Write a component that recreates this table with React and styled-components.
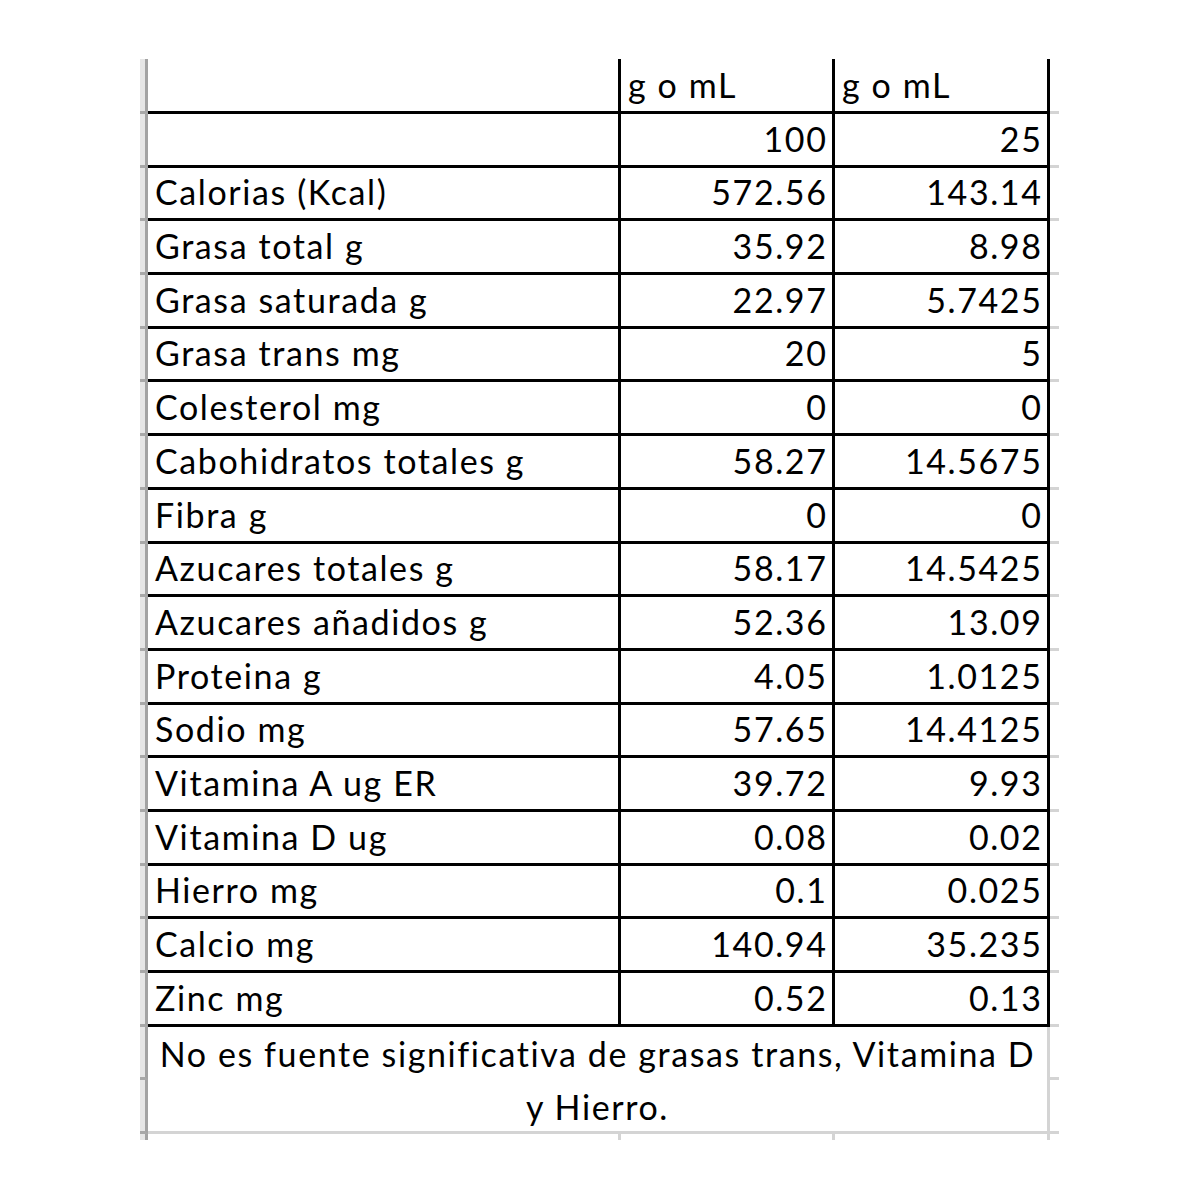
import React from "react";
import styled, { createGlobalStyle } from "styled-components";

const GlobalStyle = createGlobalStyle`
  * { box-sizing: border-box; }
  body {
    margin: 0;
    background: #fff;
    font-family: Lato, "Open Sans", sans-serif;
    color: #000;
  }
`;

const BLACK = "#000";
const GRID = "#d4d4d4";

const Sheet = styled.div`
  padding: 59px 0 0 140px;
  display: flex;
  flex-direction: column;
`;

const Row = styled.div`
  display: flex;
  height: ${(p) => p.h}px;
`;

const Gutter = styled.div`
  width: 8px;
  flex: none;
  background: #e6e6e6;
  border-right: 3px solid #a3a3a3;
  border-bottom: ${(p) => (p.tick ? "3px solid #a8a8a8" : "none")};
  height: 100%;
`;

const GutterStack = styled.div`
  display: flex;
  flex-direction: column;
  width: 8px;
  flex: none;
  & > div {
    flex: 1;
  }
`;

const Cell = styled.div`
  width: ${(p) => p.w}px;
  flex: none;
  display: flex;
  align-items: flex-end;
  justify-content: ${(p) => (p.right ? "flex-end" : "flex-start")};
  padding: 0 4.5px 9px 7px;
  border-bottom: 3px solid ${BLACK};
  border-right: ${(p) => (p.edge ? `3px solid ${BLACK}` : "none")};
  font-size: 34px;
  line-height: 34px;
  letter-spacing: 1.6px;
  white-space: nowrap;
`;

const Stub = styled.div`
  width: 9px;
  flex: none;
  border-bottom: 3px solid ${GRID};
  height: ${(p) => (p.full ? "100%" : "auto")};
  flex-grow: ${(p) => (p.full ? 0 : 1)};
`;

const StubStack = styled.div`
  display: flex;
  flex-direction: column;
  width: 9px;
  flex: none;
`;

const Note = styled.div`
  width: 902px;
  flex: none;
  border-right: 3px solid ${GRID};
  border-bottom: 3px solid ${GRID};
  text-align: center;
  font-size: 34px;
  line-height: 53px;
  letter-spacing: 1.6px;
  white-space: nowrap;
  padding: 0;
`;

const TailTick = styled.div`
  width: ${(p) => p.w}px;
  flex: none;
  border-right: 3px solid ${GRID};
`;

const rows = [
  ["", "100", "25"],
  ["Calorias (Kcal)", "572.56", "143.14"],
  ["Grasa total g", "35.92", "8.98"],
  ["Grasa saturada g", "22.97", "5.7425"],
  ["Grasa trans mg", "20", "5"],
  ["Colesterol mg", "0", "0"],
  ["Cabohidratos totales g", "58.27", "14.5675"],
  ["Fibra g", "0", "0"],
  ["Azucares totales g", "58.17", "14.5425"],
  ["Azucares añadidos g", "52.36", "13.09"],
  ["Proteina g", "4.05", "1.0125"],
  ["Sodio mg", "57.65", "14.4125"],
  ["Vitamina A ug ER", "39.72", "9.93"],
  ["Vitamina D ug", "0.08", "0.02"],
  ["Hierro mg", "0.1", "0.025"],
  ["Calcio mg", "140.94", "35.235"],
  ["Zinc mg", "0.52", "0.13"],
];

export default function App() {
  return (
    <>
      <GlobalStyle />
      <Sheet>
        <Row h={55}>
          <Gutter tick />
          <Cell w={473} edge></Cell>
          <Cell w={214} edge>g o mL</Cell>
          <Cell w={215} edge>g o mL</Cell>
          <Stub full />
        </Row>
        {rows.map(([label, per100, per25], i) => (
          <Row h={53.7} key={i}>
            <Gutter tick />
            <Cell w={473} edge>{label}</Cell>
            <Cell w={214} edge right>{per100}</Cell>
            <Cell w={215} edge right>{per25}</Cell>
            <Stub full />
          </Row>
        ))}
        <Row h={107}>
          <GutterStack>
            <Gutter tick />
            <Gutter tick />
          </GutterStack>
          <Note>
            No es fuente significativa de grasas trans, Vitamina D
            <br />y Hierro.
          </Note>
          <StubStack>
            <Stub />
            <Stub />
          </StubStack>
        </Row>
        <Row h={6}>
          <Gutter />
          <TailTick w={473} />
          <TailTick w={214} />
          <TailTick w={215} />
        </Row>
      </Sheet>
    </>
  );
}
